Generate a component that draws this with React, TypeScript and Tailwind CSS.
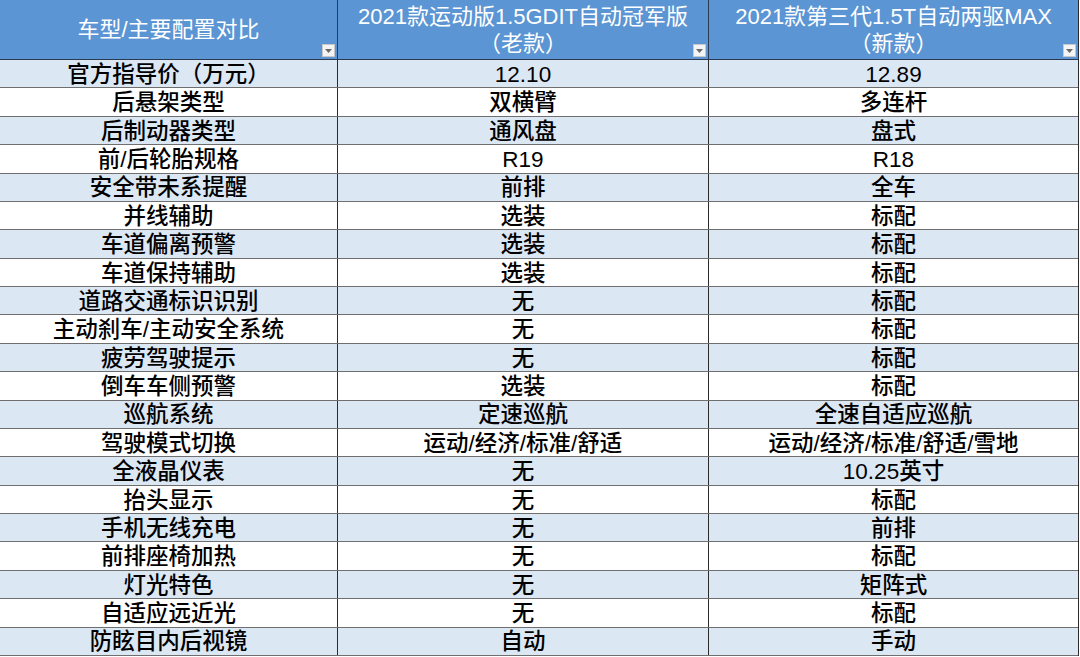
const rows: [string, string, string][] = [
  ['官方指导价（万元）', '12.10', '12.89'],
  ['后悬架类型', '双横臂', '多连杆'],
  ['后制动器类型', '通风盘', '盘式'],
  ['前/后轮胎规格', 'R19', 'R18'],
  ['安全带未系提醒', '前排', '全车'],
  ['并线辅助', '选装', '标配'],
  ['车道偏离预警', '选装', '标配'],
  ['车道保持辅助', '选装', '标配'],
  ['道路交通标识识别', '无', '标配'],
  ['主动刹车/主动安全系统', '无', '标配'],
  ['疲劳驾驶提示', '无', '标配'],
  ['倒车车侧预警', '选装', '标配'],
  ['巡航系统', '定速巡航', '全速自适应巡航'],
  ['驾驶模式切换', '运动/经济/标准/舒适', '运动/经济/标准/舒适/雪地'],
  ['全液晶仪表', '无', '10.25英寸'],
  ['抬头显示', '无', '标配'],
  ['手机无线充电', '无', '前排'],
  ['前排座椅加热', '无', '标配'],
  ['灯光特色', '无', '矩阵式'],
  ['自适应远近光', '无', '标配'],
  ['防眩目内后视镜', '自动', '手动'],
];

function FilterButton() {
  return (
    <span className="absolute right-[2px] bottom-[2px] w-[13px] h-[13px] bg-[#f4f4f4] border border-[#c8c8c8] flex items-center justify-center">
      <svg width="7" height="4" viewBox="0 0 7 4">
        <path d="M0 0 L7 0 L3.5 4 Z" fill="#6b6b6b" />
      </svg>
    </span>
  );
}

export default function App() {
  return (
    <div
      className="w-[1080px] h-[657px] bg-white overflow-hidden text-black"
      style={{ fontFamily: '"Liberation Sans", "Noto Sans CJK SC", sans-serif' }}
    >
      <div className="w-[1079px] h-[656px] flex flex-col border-r border-[#2b2b2b]">
        {/* header */}
        <div className="h-[60px] flex bg-[#5b95d3] text-white text-[22px] leading-[27px] border-b border-[#2b3a4f]">
          <div className="relative w-[338px] flex items-center justify-center border-r border-[#2b3a4f]">
            车型/主要配置对比
            <FilterButton />
          </div>
          <div className="relative w-[371px] flex flex-col items-center justify-center border-r border-[#2b3a4f]">
            <span>2021款运动版1.5GDIT自动冠军版</span>
            <span>（老款）</span>
            <FilterButton />
          </div>
          <div className="relative flex-1 flex flex-col items-center justify-center">
            <span>2021款第三代1.5T自动两驱MAX</span>
            <span>（新款）</span>
            <FilterButton />
          </div>
        </div>
        {/* body */}
        <div className="flex-1 flex flex-col">
          {rows.map(([name, oldV, newV], i) => (
            <div
              key={name}
              className={`flex-1 flex text-[22.5px] leading-none font-medium border-b border-[#6f6f6f] ${
                i % 2 === 0 ? 'bg-[#dce7f4]' : 'bg-white'
              }`}
            >
              <div className="w-[338px] flex items-center justify-center pt-[3px] border-r border-[#2b2b2b]">{name}</div>
              <div className="w-[371px] flex items-center justify-center pt-[3px] border-r border-[#2b2b2b]">{oldV}</div>
              <div className="flex-1 flex items-center justify-center pt-[3px]">{newV}</div>
            </div>
          ))}
        </div>
      </div>
    </div>
  );
}
